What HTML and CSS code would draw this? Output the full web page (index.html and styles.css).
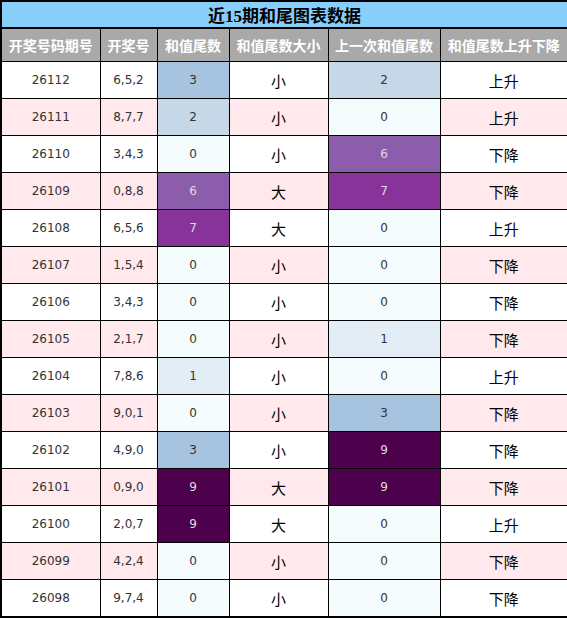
FILE: index.html
```html
<!DOCTYPE html>
<html lang="zh">
  <head>
    <meta charset="UTF-8" />
    <meta name="viewport" content="width=device-width, initial-scale=1.0" />
    <title>近15期和尾图表数据</title>
    <link rel="stylesheet" href="styles.css">
  </head>
  <body>
    <table class="tail-table">
      <colgroup>
        <col class="c-issue" />
        <col class="c-draw" />
        <col class="c-tail" />
        <col class="c-size" />
        <col class="c-prev" />
        <col class="c-trend" />
      </colgroup>
      <thead>
        <tr class="title-row">
          <th colspan="6">近15期和尾图表数据</th>
        </tr>
        <tr class="head-row">
          <th>开奖号码期号</th>
          <th>开奖号</th>
          <th>和值尾数</th>
          <th>和值尾数大小</th>
          <th>上一次和值尾数</th>
          <th>和值尾数上升下降</th>
        </tr>
      </thead>
      <tbody>
        <tr><td>26112</td><td>6,5,2</td><td class="h3">3</td><td class="zh">小</td><td class="h2">2</td><td class="zh">上升</td></tr>
        <tr><td>26111</td><td>8,7,7</td><td class="h2">2</td><td class="zh">小</td><td class="h0">0</td><td class="zh">上升</td></tr>
        <tr><td>26110</td><td>3,4,3</td><td class="h0">0</td><td class="zh">小</td><td class="h6">6</td><td class="zh">下降</td></tr>
        <tr><td>26109</td><td>0,8,8</td><td class="h6">6</td><td class="zh">大</td><td class="h7">7</td><td class="zh">下降</td></tr>
        <tr><td>26108</td><td>6,5,6</td><td class="h7">7</td><td class="zh">大</td><td class="h0">0</td><td class="zh">上升</td></tr>
        <tr><td>26107</td><td>1,5,4</td><td class="h0">0</td><td class="zh">小</td><td class="h0">0</td><td class="zh">下降</td></tr>
        <tr><td>26106</td><td>3,4,3</td><td class="h0">0</td><td class="zh">小</td><td class="h0">0</td><td class="zh">下降</td></tr>
        <tr><td>26105</td><td>2,1,7</td><td class="h0">0</td><td class="zh">小</td><td class="h1">1</td><td class="zh">下降</td></tr>
        <tr><td>26104</td><td>7,8,6</td><td class="h1">1</td><td class="zh">小</td><td class="h0">0</td><td class="zh">上升</td></tr>
        <tr><td>26103</td><td>9,0,1</td><td class="h0">0</td><td class="zh">小</td><td class="h3">3</td><td class="zh">下降</td></tr>
        <tr><td>26102</td><td>4,9,0</td><td class="h3">3</td><td class="zh">小</td><td class="h9">9</td><td class="zh">下降</td></tr>
        <tr><td>26101</td><td>0,9,0</td><td class="h9">9</td><td class="zh">大</td><td class="h9">9</td><td class="zh">下降</td></tr>
        <tr><td>26100</td><td>2,0,7</td><td class="h9">9</td><td class="zh">大</td><td class="h0">0</td><td class="zh">上升</td></tr>
        <tr><td>26099</td><td>4,2,4</td><td class="h0">0</td><td class="zh">小</td><td class="h0">0</td><td class="zh">下降</td></tr>
        <tr><td>26098</td><td>9,7,4</td><td class="h0">0</td><td class="zh">小</td><td class="h0">0</td><td class="zh">下降</td></tr>
      </tbody>
    </table>
  </body>
</html>
```

FILE: styles.css
```css
body {
  margin: 0;
  background-color: #fff;
  font-family: "DejaVu Sans", "Noto Sans CJK SC", sans-serif;
  color: #333;
}

.tail-table {
  width: 567px;
  table-layout: fixed;
  border-collapse: collapse;
  border: 2px solid #000;
}

.c-issue { width: 99px; }
.c-draw { width: 57px; }
.c-tail { width: 72px; }
.c-size { width: 99px; }
.c-prev { width: 112px; }
.c-trend { width: 128px; }

.tail-table th,
.tail-table td {
  border: 1px solid #000;
  text-align: center;
  padding: 0;
}

.title-row th {
  height: 23px;
  background-color: #87cefa;
  color: #000;
  font-family: "Liberation Serif", "Noto Sans CJK SC", serif;
  font-size: 17px;
  font-weight: bold;
  border-bottom-width: 2px;
}

.head-row th {
  height: 32px;
  background-color: #a9a9a9;
  color: #fff;
  font-family: "Noto Sans CJK SC", sans-serif;
  font-size: 14px;
  font-weight: bold;
  white-space: nowrap;
}

.tail-table td {
  height: 36px;
  font-size: 12px;
}

.tail-table tbody tr:nth-child(even) td {
  background-color: #ffe9ec;
}

.tail-table td.zh {
  font-family: "Noto Sans CJK SC", sans-serif;
  font-size: 15px;
  color: #000;
}

/* heat colours for tail values */
.tail-table tbody tr td.h0 { background-color: #f5fcfd; }
.tail-table tbody tr td.h1 { background-color: #e2edf5; }
.tail-table tbody tr td.h2 { background-color: #c6d8e8; }
.tail-table tbody tr td.h3 { background-color: #a6c3df; }
.tail-table tbody tr td.h6 { background-color: #8c5dab; color: #ddd; }
.tail-table tbody tr td.h7 { background-color: #883399; color: #ddd; }
.tail-table tbody tr td.h9 { background-color: #4d004b; color: #ddd; }
```
